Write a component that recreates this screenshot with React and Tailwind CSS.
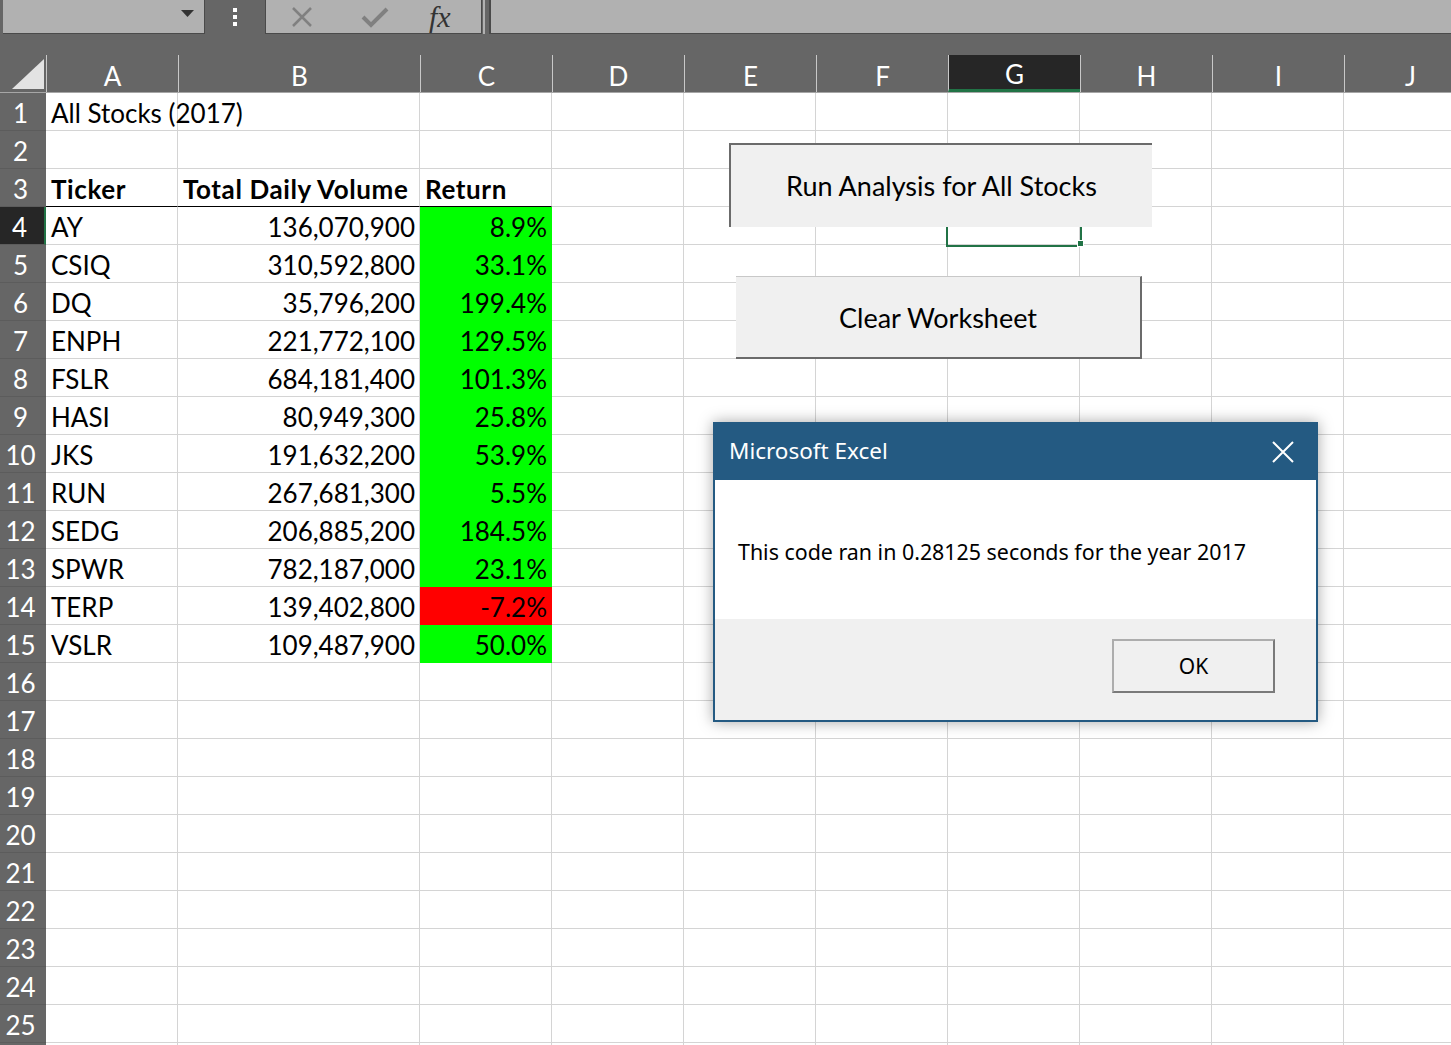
import React from "react";

const data = [
  ["AY", "136,070,900", "8.9%", "g"],
  ["CSIQ", "310,592,800", "33.1%", "g"],
  ["DQ", "35,796,200", "199.4%", "g"],
  ["ENPH", "221,772,100", "129.5%", "g"],
  ["FSLR", "684,181,400", "101.3%", "g"],
  ["HASI", "80,949,300", "25.8%", "g"],
  ["JKS", "191,632,200", "53.9%", "g"],
  ["RUN", "267,681,300", "5.5%", "g"],
  ["SEDG", "206,885,200", "184.5%", "g"],
  ["SPWR", "782,187,000", "23.1%", "g"],
  ["TERP", "139,402,800", "-7.2%", "r"],
  ["VSLR", "109,487,900", "50.0%", "g"],
];

const cols = ["A", "B", "C", "D", "E", "F", "G", "H", "I", "J"];
const colW = ["w-[132px]", "w-[242px]", "w-[132px]", "w-[132px]", "w-[132px]", "w-[132px]", "w-[132px]", "w-[132px]", "w-[132px]", "w-[132px]"];

function Cell({ w, children, className = "", align = "left" }) {
  return (
    <div
      className={`${w} h-[38px] shrink-0 border-r border-b border-[#d4d4d4] flex items-center pt-[2px] ${
        align === "right" ? "justify-end pr-[4px]" : "pl-[5px]"
      } overflow-visible whitespace-nowrap ${className}`}
    >
      {children}
    </div>
  );
}

function Row({ n }) {
  const selected = n === 4;
  let cells = [];
  for (let i = 0; i < 10; i++) cells.push({ content: null, cls: "", align: "left" });
  if (n === 1) cells[0].content = "All Stocks (2017)";
  if (n === 3) {
    cells[0].content = "Ticker";
    cells[1].content = "Total Daily Volume";
    cells[2].content = "Return";
    cells[0].cls = "font-bold tracking-[0.6px] !border-b-black";
    cells[1].cls = "font-bold tracking-[0.6px] !border-b-black";
    cells[2].cls = "font-bold tracking-[0.6px] !border-b-black";
  }
  if (n >= 4 && n <= 15) {
    const d = data[n - 4];
    cells[0].content = d[0];
    cells[1].content = d[1];
    cells[1].align = "right";
    cells[2].content = d[2];
    cells[2].align = "right";
    cells[2].cls = d[3] === "g" ? "bg-[#00ff00] !border-[#00ff00]" : "bg-[#ff0000] !border-[#ff0000]";
  }
  return (
    <div className="flex h-[38px]">
      <div
        className={`w-[46px] h-[38px] shrink-0 flex items-center justify-center pr-[5px] pt-[2px] text-white border-b border-[#5c5c5c] ${
          selected ? "bg-[#262626] border-r-[2px] border-r-[#217346]" : "bg-[#666666]"
        }`}
      >
        {n <= 25 ? n : ""}
      </div>
      {cells.map((c, i) => (
        <Cell key={i} w={colW[i]} align={c.align} className={c.cls}>
          {c.content}
        </Cell>
      ))}
    </div>
  );
}

export default function App() {
  const rows = [];
  for (let i = 1; i <= 26; i++) rows.push(i);
  return (
    <div
      className="relative w-[1451px] h-[1045px] overflow-hidden bg-white text-black text-[26px] leading-none"
      style={{ fontFamily: "Lato, 'Noto Sans', sans-serif" }}
    >
      {/* Top toolbar */}
      <div className="h-[55px] bg-[#666666] flex items-start">
        <div className="ml-[3px] w-[202px] h-[34px] shrink-0 bg-[#b1b1b1] border-r border-b border-[#4a4a4a] relative">
          <svg className="absolute left-[178px] top-[10px]" width="13" height="7" viewBox="0 0 13 7">
            <polygon points="0,0 13,0 6.5,7" fill="#333" />
          </svg>
        </div>
        <div className="w-[60px] h-[34px] shrink-0 flex flex-col items-center justify-center gap-[3px]">
          <div className="w-[4px] h-[4px] bg-white" />
          <div className="w-[4px] h-[4px] bg-white" />
          <div className="w-[4px] h-[4px] bg-white" />
        </div>
        <div className="w-[217px] h-[34px] shrink-0 bg-[#b1b1b1] border-l border-r border-b border-[#4a4a4a] flex items-center">
          <svg className="ml-[25px]" width="22" height="20" viewBox="0 0 22 20">
            <path d="M2 1 L20 19 M20 1 L2 19" stroke="#808080" strokeWidth="2.5" />
          </svg>
          <svg className="ml-[48px]" width="28" height="22" viewBox="0 0 28 22">
            <path d="M2 11 L10 19 L26 3" stroke="#808080" strokeWidth="4" fill="none" />
          </svg>
          <span
            className="ml-[40px] text-[#333] italic text-[30px] leading-none"
            style={{ fontFamily: "'Liberation Serif', serif" }}
          >
            fx
          </span>
        </div>
        <div className="w-[2px] h-[34px] shrink-0 bg-[#b1b1b1] ml-[1px]" />
        <div className="flex-1 h-[34px] ml-[4px] bg-[#b1b1b1] border-l-[2px] border-b border-[#4a4a4a]" />
      </div>

      {/* Column headers */}
      <div className="flex h-[38px] bg-[#666666] border-b border-[#a6a6a6]">
        <div className="w-[46px] h-[37px] shrink-0 relative">
          <svg className="absolute left-[12px] top-[4px]" width="32" height="30" viewBox="0 0 32 30">
            <polygon points="32,0 32,30 0,30" fill="#e3e3e3" />
          </svg>
        </div>
        {cols.map((c, i) => (
          <div
            key={c}
            className={`${colW[i]} h-[37px] shrink-0 flex items-center justify-center pt-[4px] text-white border-l border-[#c8c8c8] ${
              c === "G" ? "bg-[#262626] border-b-[3px] border-b-[#217346]" : ""
            }`}
          >
            {c}
          </div>
        ))}
      </div>

      {/* Grid */}
      <div className="flex flex-col">
        {rows.map((n) => (
          <Row key={n} n={n} />
        ))}
      </div>

      {/* Selection G4 */}
      <div className="absolute left-[946px] top-[205px] w-[136px] h-[42px] border-2 border-[#217346]" />
      <div className="absolute left-[1077px] top-[240px] w-[7px] h-[7px] bg-[#217346] border border-white" />

      {/* Buttons */}
      <div className="absolute left-[729px] top-[143px] w-[423px] h-[84px] bg-[#f0f0f0] border-t-2 border-l-2 border-[#6b6b6b] flex items-center justify-center text-[27px] pb-[2px]">
        Run Analysis for All Stocks
      </div>
      <div className="absolute left-[736px] top-[276px] w-[406px] h-[83px] bg-[#f0f0f0] border-t border-[#c8c8c8] border-r-2 border-b-2 border-r-[#6b6b6b] border-b-[#6b6b6b] flex items-center justify-center text-[27px]">
        Clear Worksheet
      </div>

      {/* Dialog */}
      <div
        className="absolute left-[713px] top-[422px] w-[605px] h-[300px] border-2 border-[#245a82] bg-[#f0f0f0] shadow-[0_0_14px_rgba(0,0,0,0.35)] flex flex-col"
        style={{ fontFamily: "'Noto Sans', sans-serif" }}
      >
        <div className="h-[56px] bg-[#245a82] flex items-center justify-between pl-[14px] pr-[22px] text-white text-[22.5px]">
          <span className="-mt-[1px]">Microsoft Excel</span>
          <svg width="22" height="22" viewBox="0 0 22 22">
            <path d="M1 1 L21 21 M21 1 L1 21" stroke="white" strokeWidth="2" />
          </svg>
        </div>
        <div className="h-[139px] bg-white flex items-center pl-[23px] text-[21.4px] text-black pt-[4px]">
          This code ran in 0.28125 seconds for the year 2017
        </div>
        <div className="flex-1 flex justify-end items-start pt-[20px] pr-[41px]">
          <div className="w-[163px] h-[54px] border-2 border-[#adadad] border-r-[#7a7a7a] border-b-[#7a7a7a] bg-[#f0f0f0] flex items-center justify-center text-[21px] text-black">
            OK
          </div>
        </div>
      </div>
    </div>
  );
}
